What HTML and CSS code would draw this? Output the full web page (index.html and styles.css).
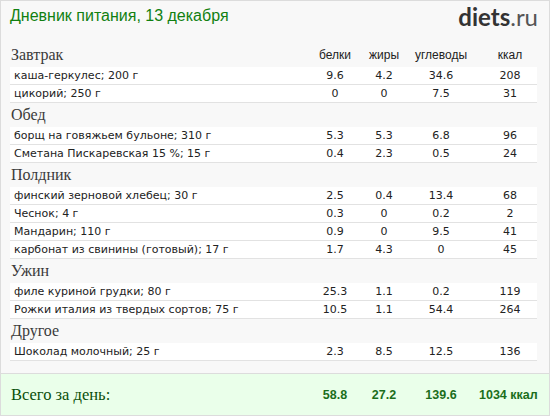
FILE: index.html
```html
<!DOCTYPE html>
<html lang="ru">
<head>
<meta charset="utf-8">
<title>Дневник питания</title>
<link rel="stylesheet" href="styles.css">
</head>
<body>
<div class="frame">
  <div class="top">
    <div class="title">Дневник питания, 13 декабря</div>
    <div class="logo"><b>diets</b>.ru</div>
  </div>

  <div class="section">
    <div class="head">
      <div class="meal">Завтрак</div>
      <div class="col">белки</div><div class="col">жиры</div><div class="col">углеводы</div><div class="col kcal">ккал</div>
    </div>
    <div class="row"><div class="name">каша-геркулес; 200 г</div><div class="v">9.6</div><div class="v">4.2</div><div class="v">34.6</div><div class="v kcal">208</div></div>
    <div class="row"><div class="name">цикорий; 250 г</div><div class="v">0</div><div class="v">0</div><div class="v">7.5</div><div class="v kcal">31</div></div>
  </div>

  <div class="section">
    <div class="head"><div class="meal">Обед</div></div>
    <div class="row"><div class="name">борщ на говяжьем бульоне; 310 г</div><div class="v">5.3</div><div class="v">5.3</div><div class="v">6.8</div><div class="v kcal">96</div></div>
    <div class="row"><div class="name">Сметана Пискаревская 15 %; 15 г</div><div class="v">0.4</div><div class="v">2.3</div><div class="v">0.5</div><div class="v kcal">24</div></div>
  </div>

  <div class="section">
    <div class="head"><div class="meal">Полдник</div></div>
    <div class="row"><div class="name">финский зерновой хлебец; 30 г</div><div class="v">2.5</div><div class="v">0.4</div><div class="v">13.4</div><div class="v kcal">68</div></div>
    <div class="row"><div class="name">Чеснок; 4 г</div><div class="v">0.3</div><div class="v">0</div><div class="v">0.2</div><div class="v kcal">2</div></div>
    <div class="row"><div class="name">Мандарин; 110 г</div><div class="v">0.9</div><div class="v">0</div><div class="v">9.5</div><div class="v kcal">41</div></div>
    <div class="row"><div class="name">карбонат из свинины (готовый); 17 г</div><div class="v">1.7</div><div class="v">4.3</div><div class="v">0</div><div class="v kcal">45</div></div>
  </div>

  <div class="section">
    <div class="head"><div class="meal">Ужин</div></div>
    <div class="row"><div class="name">филе куриной грудки; 80 г</div><div class="v">25.3</div><div class="v">1.1</div><div class="v">0.2</div><div class="v kcal">119</div></div>
    <div class="row"><div class="name">Рожки италия из твердых сортов; 75 г</div><div class="v">10.5</div><div class="v">1.1</div><div class="v">54.4</div><div class="v kcal">264</div></div>
  </div>

  <div class="section">
    <div class="head"><div class="meal">Другое</div></div>
    <div class="row"><div class="name">Шоколад молочный; 25 г</div><div class="v">2.3</div><div class="v">8.5</div><div class="v">12.5</div><div class="v kcal">136</div></div>
  </div>

  <div class="total">
    <div class="total-label">Всего за день:</div>
    <div class="t">58.8</div><div class="t">27.2</div><div class="t">139.6</div><div class="t kcal tk">1034 ккал</div>
  </div>
</div>
</body>
</html>
```

FILE: styles.css
```css
* { box-sizing: border-box; }
html, body { margin: 0; padding: 0; }
body { background: #ffffff; }

.frame {
  width: 550px;
  height: 416px;
  border: 1px solid #dcdcdc;
  background: #f8f8f8;
  padding: 0 12px 0 9px;
  display: flex;
  flex-direction: column;
  overflow: hidden;
}

.top {
  height: 42px;
  display: flex;
  justify-content: space-between;
  align-items: flex-start;
  padding-top: 4px;
}
.title {
  font-family: "Liberation Sans", Arial, sans-serif;
  font-size: 16px;
  color: #118011;
  line-height: 22px;
}
.logo {
  font-family: Lato, "Open Sans", sans-serif;
  font-size: 24px;
  color: #555;
  line-height: 24px;
  margin-right: -1px;
}
.logo b { color: #333; font-weight: 700; }

.head, .row, .total {
  display: grid;
  grid-template-columns: 1fr 48px 50px 64px 64px;
  align-items: center;
}
.head { height: 24px; }
.section:first-child .head { height: 22px; }
.meal {
  font-family: "Liberation Serif", "DejaVu Serif", serif;
  font-size: 16px;
  color: #3a3a3a;
  padding-left: 1px;
}
.col {
  font-family: "Liberation Sans", Arial, sans-serif;
  font-size: 12px;
  color: #222;
  text-align: center;
}

.row {
  height: 18px;
  background: #ffffff;
  border-bottom: 1px solid #e2e2e2;
  font-family: "DejaVu Sans", Verdana, sans-serif;
  font-size: 11px;
  color: #222;
}
.name { padding-left: 4px; white-space: nowrap; }
.v { text-align: center; }
.kcal { padding-left: 10px; }

.total {
  margin: auto -12px 0 -9px;
  padding: 0 12px 0 9px;
  height: 42px;
  background: #eaffea;
  border-top: 1px solid #dcdcdc;
}
.total-label {
  font-family: "Liberation Serif", "DejaVu Serif", serif;
  font-size: 16.5px;
  color: #0a4f0a;
  padding-left: 1px;
}
.t {
  font-family: "Liberation Sans", Arial, sans-serif;
  font-weight: 700;
  font-size: 12.5px;
  color: #1b6e1b;
  text-align: center;
}
.tk { padding-left: 6px; padding-right: 0; white-space: nowrap; }
```
